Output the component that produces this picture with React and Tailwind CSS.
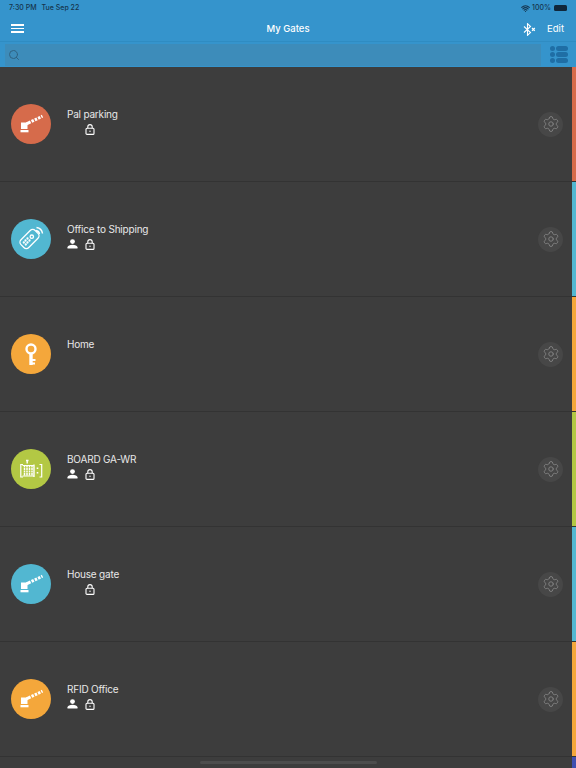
import { Search, Settings, Wifi } from "lucide-react";

const BarrierIcon = () => (
  <svg width="26" height="26" viewBox="0 0 26 26" fill="white">
    <path d="M3 11.500h6.500v6.500H3z" />
    <path d="M2.500 19h8v2.300h-8z" />
    <path d="M8.500 12.800L24.500 5.200" fill="none" stroke="white" strokeWidth="3" strokeDasharray="4.500 1.100 2.500 1.100 2.500 1.100 2.500 1.100 2" />
  </svg>
)

const RemoteIcon = () => (
  <svg width="28" height="28" viewBox="0 0 28 28" fill="none" stroke="white" strokeWidth="1.300">
    <rect x="7" y="4" width="11" height="20" rx="3.500" transform="rotate(45 12.500 14)" />
    <circle cx="14.800" cy="11.700" r="1.700" />
    <circle cx="10.500" cy="13.500" r="0.500" fill="white" />
    <circle cx="12.500" cy="15.500" r="0.500" fill="white" />
    <circle cx="8.500" cy="15.500" r="0.500" fill="white" />
    <circle cx="10.500" cy="17.500" r="0.500" fill="white" />
    <circle cx="6.800" cy="17.500" r="0.500" fill="white" />
    <circle cx="8.800" cy="19.500" r="0.500" fill="white" />
    <path d="M19 5.500a4 4 0 0 1 3.500 3.500" strokeWidth="1.400" />
    <path d="M19.500 2.500a7 7 0 0 1 6 6" strokeWidth="1.400" />
  </svg>
)

const KeyIcon = () => (
  <svg width="18" height="28" viewBox="0 0 18 28" fill="none" stroke="white">
    <circle cx="9" cy="9" r="4.500" strokeWidth="2.400" />
    <path d="M9 14v11" strokeWidth="3.400" />
    <path d="M10 20h3.500M10 23.500h3" strokeWidth="1.800" />
  </svg>
)

const GateIcon = () => (
  <svg width="28" height="22" viewBox="0 0 28 22" fill="none" stroke="white" strokeWidth="1.200">
    <path d="M6 6.500H3.800v12.500H6" />
    <path d="M5.500 7.500h11.500M5.500 18h11.500" />
    <path d="M7.500 7.500v10.500M10 7.500v10.500M12.500 7.500v10.500M15 7.500v10.500" strokeDasharray="2 0.500" strokeWidth="1.500" />
    <path d="M17 6.500v12.500" strokeWidth="1.400" />
    <path d="M9 2.500h2.500M10.200 3v2.500" strokeWidth="1.400" />
    <path d="M20.500 9.500v1.500M20.500 14v1.500" strokeWidth="1.600" />
    <path d="M22.500 6.500h2.200v12.500h-2.200" />
  </svg>
)

const BluetoothX = () => (
  <svg width="14" height="13" viewBox="0 0 14 13" fill="none" stroke="white" strokeWidth="1.100">
    <path d="M1 3.500l6.500 6-3 2.800V.700l3 2.800L1 9.500" />
    <path d="M9 5l2.800 2.800M11.800 5L9 7.800" strokeWidth="1.200" />
  </svg>
)

const PersonIcon = () => (
  <svg width="11" height="10" viewBox="0 0 11 10" fill="white" className="shrink-0">
    <circle cx="5.500" cy="2.600" r="2.400" />
    <path d="M.5 9.500V8.300C.5 6.600 3 5.700 5.500 5.700s5 .9 5 2.600v1.200z" />
  </svg>
)

const LockIcon = () => (
  <svg width="10" height="11" viewBox="0 0 10 11" fill="none" stroke="white" strokeWidth="1.100" className="shrink-0">
    <rect x="1" y="4.300" width="8" height="6.100" rx="1" />
    <path d="M2.800 4.300V2.800a2.200 2.200 0 0 1 4.400 0v1.500" />
    <circle cx="5" cy="7.300" r="0.700" fill="white" stroke="none" />
  </svg>
)

const gates = [
  { name: "Pal parking", color: "bg-[#d66b4b]", icon: <BarrierIcon />, user: false, lock: true },
  { name: "Office to Shipping", color: "bg-[#52b7d1]", icon: <RemoteIcon />, user: true, lock: true },
  { name: "Home", color: "bg-[#f4a73b]", icon: <KeyIcon />, user: false, lock: false },
  { name: "BOARD GA-WR", color: "bg-[#b3c844]", icon: <GateIcon />, user: true, lock: true },
  { name: "House gate", color: "bg-[#52b7d1]", icon: <BarrierIcon />, user: false, lock: true },
  { name: "RFID Office", color: "bg-[#f4a73b]", icon: <BarrierIcon />, user: true, lock: true },
]

const GateRow = ({ gate }) => (
  <div className="flex h-[115px] shrink-0 border-b border-[#333333]">
    <div className="flex flex-1 items-center pl-[11px] pr-[9px]">
      <div className={`flex h-10 w-10 items-center justify-center rounded-full ${gate.color}`}>
        {gate.icon}
      </div>
      <div className="ml-4 flex h-10 flex-1 flex-col pt-[2px]">
        <div className="text-[10px] leading-4 tracking-[-0.2px] text-[#e8e8e8]">{gate.name}</div>
        <div className="-mt-[1px] flex h-4 items-center">
          <div className="flex w-[11px] justify-center">
            {gate.user && <PersonIcon />}
          </div>
          <div className="ml-[6px] flex w-[11px] justify-center">
            {gate.lock && <LockIcon />}
          </div>
        </div>
      </div>
      <div className="flex h-[25px] w-[25px] items-center justify-center rounded-full bg-[#474747]">
        <Settings size={18} className="text-[#858585]" strokeWidth={1.200} />
      </div>
    </div>
    <div className={`w-1 ${gate.color}`} />
  </div>
)

const App = () => {
  return (
    <div className="relative flex h-[768px] w-[576px] flex-col overflow-hidden bg-[#3d3d3d] font-['Inter',sans-serif]">
      <div className="flex h-[18px] shrink-0 items-end justify-between bg-[#3594cc] px-[9px] pb-[5px] text-[7px] leading-[10px] text-[#15344d]">
        <div className="flex gap-[5px] font-medium">
          <span>7:30 PM</span>
          <span>Tue Sep 22</span>
        </div>
        <div className="flex items-center gap-[2px] font-medium">
          <Wifi size={9} strokeWidth={3} />
          <span>100%</span>
          <div className="ml-[1px] h-[6px] w-[13px] rounded-[1.500px] bg-[#10273a]" />
        </div>
      </div>
      <div className="relative flex h-[23px] shrink-0 items-center justify-between bg-[#3594cc] pl-[11px] pr-3">
        <div className="mb-[2px] flex w-[13px] flex-col gap-[2px]">
          <div className="h-[1.500px] bg-white" />
          <div className="h-[1.500px] bg-white" />
          <div className="h-[1.500px] bg-white" />
        </div>
        <div className="absolute left-0 right-0 text-center text-[9.500px] font-medium text-white">My Gates</div>
        <div className="flex items-center gap-[10px]">
          <BluetoothX />
          <span className="text-[9.500px] text-white">Edit</span>
        </div>
      </div>
      <div className="flex h-[26px] shrink-0 border-t border-[#2f8cc2] bg-[#3594cc]">
        <div className="ml-[5px] mt-[2px] mb-[1px] flex flex-1 items-center bg-[#3d8cba] pl-[3px]">
          <Search size={12} className="text-[#2f6282]" strokeWidth={2} />
        </div>
        <div className="flex w-[35px] flex-col justify-center gap-[1.500px] pl-[9px]">
          {[0, 1, 2].map((i) => (
            <div key={i} className="flex items-center gap-[1px]">
              <div className="h-[4.500px] w-[4.500px] rounded-full bg-[#1f6ea5]" />
              <div className="h-[4.500px] w-[12px] rounded-full bg-[#1f6ea5]" />
            </div>
          ))}
        </div>
      </div>
      {gates.map((gate) => (
        <GateRow key={gate.name} gate={gate} />
      ))}
      <div className="flex flex-1 justify-end">
        <div className="w-1 bg-[#3f4fb0]" />
      </div>
      <div className="absolute bottom-[4px] left-[200px] h-[3px] w-[177px] rounded-full bg-[#4d4d4d]" />
    </div>
  )
}

export default App
